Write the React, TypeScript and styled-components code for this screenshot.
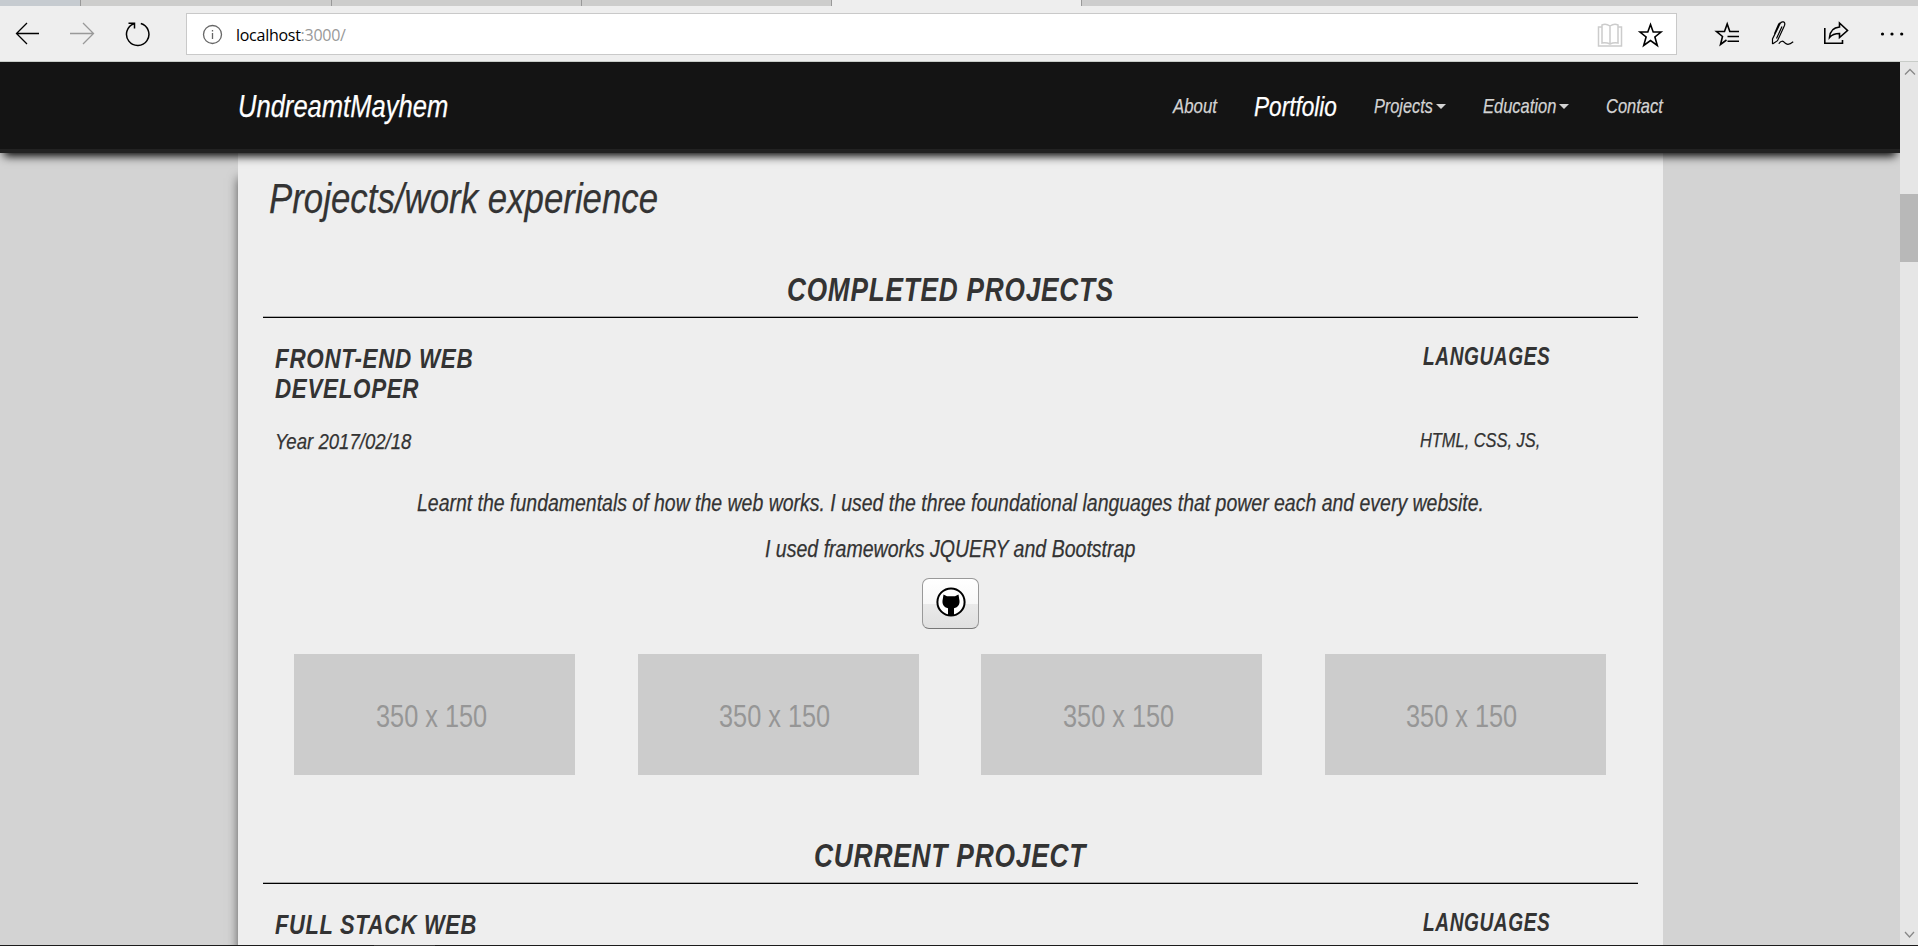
import React, { useLayoutEffect, useRef, useState } from "react";
import styled, { createGlobalStyle } from "styled-components";

const GlobalStyle = createGlobalStyle`
  * { box-sizing: border-box; }
  html, body { margin: 0; padding: 0; overflow: hidden; }
  h1, h2, h3, p { margin: 0; font-weight: inherit; font-size: inherit; }
`;

/* ---------- condensed text ---------- */

const Line = styled.span<{ $size: number; $width: number; $bold?: boolean; $upright?: boolean }>`
  display: block;
  width: ${(p) => p.$width}px;
  white-space: nowrap;
  font-family: "Liberation Sans Narrow", "Liberation Sans", Arial, sans-serif;
  font-size: ${(p) => p.$size}px;
  font-weight: ${(p) => (p.$bold ? 700 : 400)};
  font-style: ${(p) => (p.$upright ? "normal" : "italic")};
  letter-spacing: ${(p) => (p.$bold ? "0.03em" : "normal")};
  -webkit-text-stroke: ${(p) => (p.$bold || p.$upright ? 0 : 0.25)}px currentColor;
`;

const Glyphs = styled.span`
  display: inline-block;
  transform-origin: 0 50%;
`;

type CondensedProps = {
  size: number;
  width: number;
  bold?: boolean;
  upright?: boolean;
  children: string;
};

/* Condenses a line of text so that it takes up exactly `width` pixels. */
function Condensed({ size, width, bold, upright, children }: CondensedProps) {
  const ref = useRef<HTMLSpanElement>(null);
  const [scale, setScale] = useState(1);
  useLayoutEffect(() => {
    if (ref.current) setScale(width / ref.current.offsetWidth);
  }, [width, size, children]);
  return (
    <Line $size={size} $width={width} $bold={bold} $upright={upright}>
      <Glyphs ref={ref} style={{ transform: `scaleX(${scale})` }}>
        {children}
      </Glyphs>
    </Line>
  );
}

/* ---------- browser chrome ---------- */

const Screen = styled.div`
  display: flex;
  flex-direction: column;
  width: 1918px;
  height: 946px;
  overflow: hidden;
  background: #d3d3d3;
`;

const TabStrip = styled.div`
  display: flex;
  flex: none;
  height: 6px;
  background: #cdcdcd;
`;

const Tab = styled.div<{ $width: number; $active?: boolean; $first?: boolean }>`
  width: ${(p) => p.$width}px;
  border-right: 1px solid #999;
  background: ${(p) => (p.$active ? "#eee" : p.$first ? "#c6cbd0" : "#cdcdcc")};
`;

const Toolbar = styled.div`
  display: flex;
  flex: none;
  align-items: center;
  height: 56px;
  padding: 0 7px 0 13px;
  background: #eee;
  border-bottom: 1px solid #c8ccc8;
`;

const NavButtons = styled.div`
  display: flex;
  width: 173px;
  gap: 26px;
`;

const Icon = styled.svg`
  display: block;
  flex: none;
  width: 30px;
  height: 30px;
  fill: none;
  stroke: #000;
  stroke-width: 1.3;
`;

const AddressBar = styled.div`
  display: flex;
  align-items: center;
  width: 1491px;
  height: 42px;
  padding: 0 11px 0 11px;
  background: #fff;
  border: 1px solid #c9c9c9;
`;

const Url = styled.div`
  flex: 1;
  padding: 2px 0 0 8px;
  font: 16px/20px "Open Sans", "Noto Sans", sans-serif;
  letter-spacing: -0.27px;
  color: #000;
  span { color: #999; }
`;

const Tools = styled.div`
  display: flex;
  margin-left: 36px;
  gap: 24.5px;
`;

const AddressTools = styled.div`
  display: flex;
  gap: 10px;
`;

function BrowserToolbar() {
  return (
    <Toolbar>
      <NavButtons>
        <Icon viewBox="0 0 30 30"><path d="M14 4 3.500 14.500 14 25M3.500 14.500H26" /></Icon>
        <Icon viewBox="0 0 30 30"><path stroke="#999" d="M14 4 24.500 14.500 14 25M24.500 14.500H1" /></Icon>
        <Icon viewBox="0 0 30 30"><path d="M15.800 4.500A11.200 11.200 0 1 1 9 4.700M3.500 4.200H9.500V9.500" strokeWidth="1.500" /></Icon>
      </NavButtons>
      <AddressBar>
        <Icon viewBox="0 0 30 30">
          <circle cx="14.500" cy="15.500" r="9" stroke="#666" />
          <path d="M14.500 14V20M14.500 11V12.500" stroke="#666" />
        </Icon>
        <Url>localhost<span>:3000/</span></Url>
        <AddressTools>
          <Icon viewBox="0 0 30 30">
            <path stroke="#ccc" strokeWidth="1.500" d="M15 7C12 5 9 5 7 6V24C10 23.500 12 23.500 15 25 18 23.500 20 23.500 23 24V6C21 5 18 5 15 7V25M7 8H3.500V27H26.500V8H23" />
          </Icon>
          <Icon viewBox="0 0 30 30">
            <path strokeWidth="1.600" d="M15.500 5.500 18.200 13H26L19.900 18 22.300 26.500 15.500 21.500 8.700 26.500 11.100 18 5 13H12.800Z" />
          </Icon>
        </AddressTools>
      </AddressBar>
      <Tools>
        <Icon viewBox="0 0 30 30">
          <path strokeWidth="1.600" d="M26 12.500H16.800L14.200 5 11.500 12.500H3.500L9.500 17.500 7.500 25.500 13.500 21M14.500 17.500H26M14.500 22.300H26" />
        </Icon>
        <Icon viewBox="0 0 30 30">
          <path strokeWidth="1.200" d="M4.500 25V20L12 4.800C13.500 1.500 18 2.500 16.500 6.500L9.500 21.700 4.500 25M6.500 14.800 10.500 5.500C11.200 4 12 3.500 14 3M14 7.500 8.500 19.500M10.800 24.800C12.800 21.500 15 21.500 17 24 19 26 22 25.500 25.200 22.800" />
        </Icon>
        <Icon viewBox="0 0 30 30">
          <path strokeWidth="1.600" d="M2.800 9V24.300H20.500V21M7.500 18.500C8 12 11.500 8.500 17.500 8V4L25.500 11.500 17.500 18.500V14.500C13 14.500 10 15.500 7.500 18.500Z" />
        </Icon>
        <Icon viewBox="0 0 30 30">
          <g fill="#000" stroke="none">
            <circle cx="5.500" cy="15" r="1.600" />
            <circle cx="15" cy="15" r="1.600" />
            <circle cx="24.700" cy="15" r="1.600" />
          </g>
        </Icon>
      </Tools>
    </Toolbar>
  );
}

const Viewport = styled.div`
  display: flex;
  flex: none;
  height: 883px;
`;

const Website = styled.div`
  width: 1900px;
  height: 883px;
  overflow: hidden;
  background: #d3d3d3;
`;

const Scrollbar = styled.div`
  display: flex;
  flex-direction: column;
  justify-content: space-between;
  align-items: center;
  width: 18px;
  background: #e6e6e6;
`;

const Thumb = styled.div`
  width: 18px;
  height: 68px;
  margin: 113px 0 auto;
  background: #b8b8b8;
`;

const Arrow = styled.svg`
  display: block;
  width: 18px;
  height: 19px;
  fill: none;
  stroke: #888;
  stroke-width: 1.3;
`;

const Taskbar = styled.div`
  height: 1px;
  background: linear-gradient(to right, #1c1c1c 374px, #3a3a3a 374px 435px, #1c1c1c 435px);
`;

/* ---------- site navigation ---------- */

const Navbar = styled.header`
  position: relative;
  z-index: 1;
  display: flex;
  justify-content: space-between;
  height: 91px;
  padding: 0 237.5px 0 237.5px;
  line-height: 87px;
  background: #141414;
  border-bottom: 4px solid #222;
  box-shadow: 0 7px 9px -4px #000;
`;

const Brand = styled.div`
  padding-top: 1px;
  color: #fff;
`;

const Menu = styled.nav`
  display: flex;
  gap: 37px;
`;

const MenuItem = styled.a<{ $active?: boolean }>`
  display: flex;
  align-items: center;
  gap: 3px;
  padding-top: ${(p) => (p.$active ? 1 : 0)}px;
  color: ${(p) => (p.$active ? "#fff" : "#d3d3d3")};
`;

const Caret = styled.i`
  border: 5px solid transparent;
  border-top-color: currentColor;
  border-bottom: 0;
  margin-top: 2px;
`;

/* ---------- page content ---------- */

const Page = styled.main`
  width: 1425px;
  height: 792px;
  margin-left: 238px;
  padding: 0 25px;
  background: #eee;
  color: #333;
  box-shadow: -8px 17px 10px -8px rgba(0, 0, 0, 0.58);
`;

const PageTitle = styled.h1`
  height: 70px;
  padding: 21px 0 0 6px;
  line-height: 50px;
`;

const SectionTitle = styled.h2<{ $top: number }>`
  display: flex;
  justify-content: center;
  height: ${(p) => p.$top + 48}px;
  padding: ${(p) => p.$top}px 1px 0 0;
  line-height: 40px;
  border-bottom: 1px solid #000;
  box-shadow: inset 0 -1px #aaa;
`;

const Summary = styled.div`
  display: flex;
  justify-content: space-between;
  height: 152px;
  padding: 26px 0 0 12px;
`;

const Role = styled.div`
  line-height: 30px;
`;

const Languages = styled.div`
  width: 215px;
  line-height: 25px;
`;

const Detail = styled.div<{ $top: number; $shift?: number }>`
  margin: ${(p) => p.$top}px 0 0 ${(p) => p.$shift ?? 0}px;
`;

const Description = styled.div`
  display: flex;
  flex-direction: column;
  align-items: center;
  gap: 16px;
  padding: 18px 1px 0 0;
  line-height: 30px;
`;

const RepoButton = styled.button`
  display: flex;
  align-items: center;
  justify-content: center;
  width: 57px;
  height: 51px;
  margin: 14px auto 0;
  padding: 0 0 3px 1px;
  border: 1px solid #999;
  border-bottom-color: #777;
  border-radius: 7px;
  background: linear-gradient(#fff, #f8f8f8 50%, #eaeaea 50%, #e0e0e0);
`;

const Gallery = styled.div`
  display: grid;
  grid-template-columns: repeat(4, 281px);
  column-gap: 62.67px;
  margin: 25px 0 0 31px;
`;

const Placeholder = styled.div`
  display: flex;
  justify-content: center;
  height: 121px;
  padding-right: 7px;
  line-height: 126px;
  color: #969696;
  background: #ccc;
`;

function GithubMark() {
  return (
    <svg width="30" height="30" viewBox="0 0 30 30">
      <circle cx="15" cy="15" r="13.600" fill="#fff" stroke="#000" strokeWidth="2" />
      <path d="M7.500 7.500 11 9.300H19L22.500 7.500 23.200 12C24.500 17 22 20.500 18 21.300V28.500H12V21.300C8 20.500 5.500 17 6.800 12Z" />
    </svg>
  );
}

const photos = ["a", "b", "c", "d"];

export default function App() {
  return (
    <Screen>
      <GlobalStyle />
      <TabStrip>
        <Tab $width={81} $first />
        <Tab $width={251} />
        <Tab $width={250} />
        <Tab $width={250} />
        <Tab $width={250} $active />
      </TabStrip>
      <BrowserToolbar />
      <Viewport>
        <Website>
          <Navbar>
            <Brand><Condensed size={32} width={210}>UndreamtMayhem</Condensed></Brand>
            <Menu>
              <MenuItem><Condensed size={21} width={44}>About</Condensed></MenuItem>
              <MenuItem $active><Condensed size={27.5} width={83}>Portfolio</Condensed></MenuItem>
              <MenuItem><Condensed size={21} width={59}>Projects</Condensed><Caret /></MenuItem>
              <MenuItem><Condensed size={21} width={73}>Education</Condensed><Caret /></MenuItem>
              <MenuItem><Condensed size={21} width={56.5}>Contact</Condensed></MenuItem>
            </Menu>
          </Navbar>
          <Page>
            <PageTitle><Condensed size={42} width={389}>Projects/work experience</Condensed></PageTitle>
            <SectionTitle $top={47}><Condensed size={33} bold width={327}>COMPLETED PROJECTS</Condensed></SectionTitle>
            <Summary>
              <Role>
                <Condensed size={28} bold width={198}>FRONT-END WEB</Condensed>
                <Condensed size={28} bold width={144}>DEVELOPER</Condensed>
                <Detail $top={23}><Condensed size={22} width={136}>Year 2017/02/18</Condensed></Detail>
              </Role>
              <Languages>
                <Condensed size={25} bold width={127}>LANGUAGES</Condensed>
                <Detail $top={58} $shift={-3.5}><Condensed size={20.5} width={120}>HTML, CSS, JS,</Condensed></Detail>
              </Languages>
            </Summary>
            <Description>
              <Condensed size={24.5} width={1067}>Learnt the fundamentals of how the web works. I used the three foundational languages that power each and every website.</Condensed>
              <Condensed size={24.5} width={370}>I used frameworks JQUERY and Bootstrap</Condensed>
            </Description>
            <RepoButton><GithubMark /></RepoButton>
            <Gallery>
              {photos.map((p) => (
                <Placeholder key={p}><Condensed size={31} upright width={111}>350 x 150</Condensed></Placeholder>
              ))}
            </Gallery>
            <SectionTitle $top={61}><Condensed size={33} bold width={272}>CURRENT PROJECT</Condensed></SectionTitle>
            <Summary>
              <Role><Condensed size={28} bold width={202}>FULL STACK WEB</Condensed></Role>
              <Languages><Condensed size={25} bold width={127}>LANGUAGES</Condensed></Languages>
            </Summary>
          </Page>
        </Website>
        <Scrollbar>
          <Arrow viewBox="0 0 18 19"><path d="M5 12.500 10 7.500 15 12.500" /></Arrow>
          <Thumb />
          <Arrow viewBox="0 0 18 19"><path d="M5 6 9.500 11 14 6" /></Arrow>
        </Scrollbar>
      </Viewport>
      <Taskbar />
    </Screen>
  );
}
